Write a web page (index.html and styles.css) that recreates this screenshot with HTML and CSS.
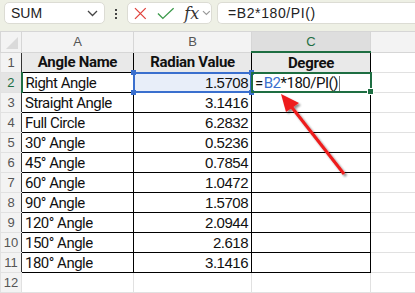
FILE: index.html
```html
<!DOCTYPE html>
<html lang="en">
<head>
    <meta charset="UTF-8">
    <title>Radians to Degrees</title>
    <link rel="stylesheet" href="styles.css">
</head>
<body>
    <div class="toolbar">
        <div class="name-box">
            <span>SUM</span>
            <svg class="chevron" width="11" height="7" viewBox="0 0 11 7"><path d="M1 1l4.5 4.5L10 1" fill="none" stroke="#444" stroke-width="1.3"/></svg>
        </div>
        <div class="dots"><i></i><i></i><i></i></div>
        <div class="fx-box">
            <svg width="13" height="13" viewBox="0 0 13 13"><path d="M1 1l11 11M12 1L1 12" stroke="#e0403a" stroke-width="1.3"/></svg>
            <svg class="check" width="18" height="13" viewBox="0 0 18 13"><path d="M1 6.5l5 5L17 1" fill="none" stroke="#3c9a4b" stroke-width="1.4"/></svg>
            <span class="fx">fx</span>
            <svg width="9" height="6" viewBox="0 0 9 6"><path d="M1 1l3.5 3.5L8 1" fill="none" stroke="#999" stroke-width="1.2"/></svg>
        </div>
        <div class="formula-input">=B2*180/PI()</div>
    </div>

    <div class="sheet">
        <table class="grid">
            <colgroup>
                <col class="c-head"><col class="c-a"><col class="c-b"><col class="c-c"><col class="c-d">
            </colgroup>
            <tr class="col-heads">
                <th class="corner"><span class="tri"></span></th>
                <th>A</th><th>B</th><th class="active-col">C</th><th></th>
            </tr>
            <tr class="title-row">
                <th class="row-num edge">1</th>
                <td class="t l">Angle Name</td><td class="t">Radian Value</td><td class="t">Degree</td><td></td>
            </tr>
            <tr>
                <th class="row-num active-row">2</th>
                <td class="t l">Right Angle</td>
                <td class="t num ref">1.5708<div class="ref-box"><b class="h1"></b><b class="h2"></b><b class="h3"></b><b class="h4"></b></div></td>
                <td class="t edit"><span class="eq">=</span><span class="blue">B2</span>*180/PI()<span class="caret"></span><div class="edit-box"><b></b></div></td>
                <td></td>
            </tr>
            <tr><th class="row-num edge">3</th><td class="t l">Straight Angle</td><td class="t num">3.1416</td><td class="t"></td><td></td></tr>
            <tr><th class="row-num edge">4</th><td class="t l">Full Circle</td><td class="t num">6.2832</td><td class="t"></td><td></td></tr>
            <tr><th class="row-num edge">5</th><td class="t l">30° Angle</td><td class="t num">0.5236</td><td class="t"></td><td></td></tr>
            <tr><th class="row-num edge">6</th><td class="t l">45° Angle</td><td class="t num">0.7854</td><td class="t"></td><td></td></tr>
            <tr><th class="row-num edge">7</th><td class="t l">60° Angle</td><td class="t num">1.0472</td><td class="t"></td><td></td></tr>
            <tr><th class="row-num edge">8</th><td class="t l">90° Angle</td><td class="t num">1.5708</td><td class="t"></td><td></td></tr>
            <tr><th class="row-num edge">9</th><td class="t l">120° Angle</td><td class="t num">2.0944</td><td class="t"></td><td></td></tr>
            <tr><th class="row-num edge">10</th><td class="t l">150° Angle</td><td class="t num">2.618</td><td class="t"></td><td></td></tr>
            <tr><th class="row-num edge">11</th><td class="t l">180° Angle</td><td class="t num">3.1416</td><td class="t"></td><td></td></tr>
            <tr><th class="row-num">12</th><td></td><td></td><td></td><td></td></tr>
        </table>

        <!-- annotation arrow -->
        <svg class="arrow" width="415" height="262" viewBox="0 0 415 262">
            <defs>
                <filter id="shadow" x="-20%" y="-20%" width="140%" height="140%">
                    <feGaussianBlur in="SourceAlpha" stdDeviation="1.2"/>
                    <feOffset dx="2" dy="2"/>
                    <feComponentTransfer><feFuncA type="linear" slope="0.45"/></feComponentTransfer>
                    <feMerge><feMergeNode/><feMergeNode in="SourceGraphic"/></feMerge>
                </filter>
            </defs>
            <g filter="url(#shadow)">
                <line x1="344" y1="143" x2="290" y2="74" stroke="#ee1c1c" stroke-width="3"/>
                <polygon points="281,63 299,72 286,81" fill="#ee1c1c"/>
            </g>
        </svg>
    </div>
</body>
</html>
```

FILE: styles.css
```css
body {
    margin: 0;
    background: #ffffff;
    font-family: "Liberation Sans Narrow", "Roboto", sans-serif;
    overflow: hidden;
    width: 415px;
    height: 293px;
}

/* formula bar */
.toolbar {
    height: 31px;
    background: #eef0e5;
    display: flex;
    align-items: flex-start;
    padding: 2px 0 0 4px;
    box-sizing: border-box;
}

.name-box,
.fx-box,
.formula-input {
    height: 22px;
    background: #ffffff;
    border: 1px solid #dcdcd4;
    border-radius: 5px;
    box-sizing: border-box;
    display: flex;
    align-items: center;
}

.name-box {
    width: 101px;
    padding: 0 6px 0 6px;
    justify-content: space-between;
    font-family: "Liberation Sans", sans-serif;
    font-size: 14px;
    color: #222;
}

.dots {
    width: 22px;
    display: flex;
    flex-direction: column;
    align-items: center;
    gap: 2px;
    padding-top: 7px;
}

.dots i {
    width: 2px;
    height: 2px;
    background: #444;
}

.fx-box {
    width: 85px;
    padding-left: 6px;
    gap: 9px;
}

.fx-box .check { margin-left: 1px; }

.fx {
    font-family: "DejaVu Serif", "Liberation Serif", serif;
    font-style: italic;
    font-size: 16px;
    color: #333;
    margin-left: 1px;
    margin-right: -6px;
}

.formula-input {
    flex: 1;
    margin-left: 5px;
    border-right: none;
    border-radius: 5px 0 0 5px;
    padding-left: 10px;
    font-family: "Liberation Sans", sans-serif;
    font-size: 14px;
    letter-spacing: 0.6px;
    color: #222;
}

/* sheet grid */
.sheet {
    position: relative;
}

.grid {
    border-collapse: collapse;
    table-layout: fixed;
    width: 415px;
}

.c-head { width: 21px; }
.c-a { width: 112px; }
.c-b { width: 118px; }
.c-c { width: 119px; }
.c-d { width: 45px; }

.grid td,
.grid th {
    height: 19px;
    padding: 0;
    border: 1px solid #e1e1e1;
    white-space: nowrap;
    overflow: visible;
}

.col-heads th {
    background: #f3f3f3;
    border-color: #d6d6d6;
    font-family: "Liberation Sans", sans-serif;
    font-weight: normal;
    font-size: 13px;
    color: #555;
}

.col-heads th.active-col {
    background: #dedede;
    color: #1e6e42;
    border-bottom: 2px solid #1e6e42;
}

.corner {
    position: relative;
}

.tri {
    position: absolute;
    right: 3px;
    bottom: 3px;
    width: 0;
    height: 0;
    border-left: 12px solid transparent;
    border-bottom: 12px solid #dadada;
}

.row-num {
    background: #f3f3f3;
    font-family: "Liberation Sans", sans-serif;
    font-weight: normal;
    font-size: 13px;
    color: #555;
    border-color: #d6d6d6;
}

.row-num.edge {
    border-right-color: #333;
}

.row-num.active-row {
    color: #1e6e42;
    background: #e4e4e4;
    border-right: 2px solid #1e6e42;
}

.t {
    border-color: #000 !important;
    font-size: 15px;
    letter-spacing: -0.5px;
    color: #111;
    padding: 0 3px !important;
}

.title-row .t {
    background: #e9e9e9;
    font-weight: bold;
    text-align: center;
    letter-spacing: -0.3px;
}

.num {
    text-align: right;
    font-family: "Liberation Sans Narrow", "Liberation Sans", sans-serif;
    font-size: 15px;
}

/* reference highlight on B2 */
.ref {
    position: relative;
    background: #e8eef9;
}

.ref-box {
    position: absolute;
    left: -1px;
    top: -1px;
    right: -1px;
    bottom: -1px;
    border: 2px solid #3a6fce;
}

.ref-box b {
    position: absolute;
    width: 5px;
    height: 5px;
    background: #3a6fce;
}

.ref-box .h1 { left: -4px; top: -4px; }
.ref-box .h2 { right: -4px; top: -4px; }
.ref-box .h3 { left: -4px; bottom: -4px; }
.ref-box .h4 { right: -4px; bottom: -4px; }

/* cell being edited */
.edit {
    position: relative;
}

.edit .eq { margin-right: 1px; }

.blue { color: #3a6fce; }

.caret {
    display: inline-block;
    width: 1px;
    height: 15px;
    background: #777;
    vertical-align: -3px;
    margin-left: 1px;
}

.edit-box {
    position: absolute;
    left: -1px;
    top: -1px;
    right: -2px;
    bottom: -1px;
    border: 2px solid #1e6e42;
}

.edit-box b {
    position: absolute;
    right: -4px;
    bottom: -4px;
    width: 5px;
    height: 5px;
    background: #1e6e42;
    border: 1px solid #fff;
}

.arrow {
    position: absolute;
    left: 0;
    top: 0;
    pointer-events: none;
}
```
